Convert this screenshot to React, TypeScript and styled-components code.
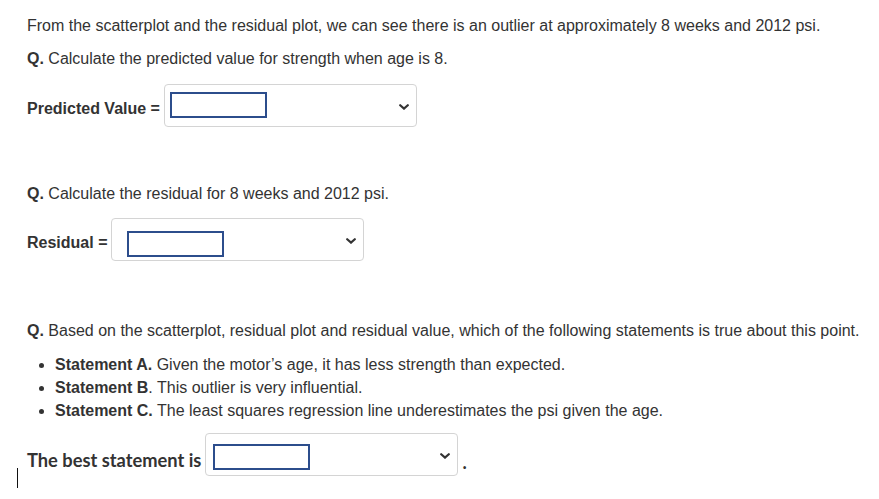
import styled, { createGlobalStyle } from "styled-components";

const GlobalStyle = createGlobalStyle`
  body {
    margin: 0;
    background: #ffffff;
    font-family: "Liberation Sans", Arial, sans-serif;
    color: #333333;
  }
`;

const Page = styled.div`
  padding: 14px 0 30px 27px;
  font-size: 16px;
`;

const Para = styled.p<{ $gap?: number }>`
  margin: 0 0 ${(p) => p.$gap ?? 9}px 0;
  line-height: 24px;
`;

const AnswerRow = styled.div<{ $top: number; $bottom: number }>`
  position: relative;
  display: flex;
  align-items: center;
  margin: ${(p) => p.$top}px 0 ${(p) => p.$bottom}px 0;
`;

const Label = styled.span<{ $lato?: boolean; $nudge?: number }>`
  font-weight: bold;
  font-size: ${(p) => (p.$lato ? 18.3 : 16)}px;
  font-family: ${(p) =>
    p.$lato ? `Lato, "Liberation Sans", sans-serif` : `"Liberation Sans", Arial, sans-serif`};
  margin-top: ${(p) => p.$nudge ?? 0}px;
  margin-right: 4px;
  white-space: nowrap;
`;

const SelectBox = styled.div<{ $padLeft: number; $padTop: number }>`
  box-sizing: border-box;
  width: 253px;
  height: 43px;
  border: 1px solid #d4d4d4;
  border-radius: 4px;
  background: #fff;
  display: flex;
  align-items: flex-start;
  justify-content: space-between;
  padding: ${(p) => p.$padTop}px 7px 0 ${(p) => p.$padLeft}px;
`;

const BlankBox = styled.div`
  box-sizing: border-box;
  width: 97px;
  height: 26px;
  border: 2px solid #2c4d8c;
`;

const Chevron = styled.svg<{ $drop: number }>`
  width: 10px;
  height: 6px;
  margin-top: ${(p) => p.$drop}px;
  flex: none;
`;

const Dot = styled.span`
  font-family: Lato, "Liberation Sans", sans-serif;
  font-weight: bold;
  font-size: 18px;
  margin-left: 4px;
  margin-top: 14px;
`;

const Caret = styled.span`
  position: absolute;
  left: -10px;
  top: 35px;
  width: 1px;
  height: 20px;
  background: #111;
`;

const StatementList = styled.ul`
  margin: 0;
  padding: 0 0 0 28px;
  line-height: 23px;
  li::marker {
    font-size: 15px;
  }
`;

const Select = ({ padLeft, padTop }: { padLeft: number; padTop: number }) => (
  <SelectBox $padLeft={padLeft} $padTop={padTop}>
    <BlankBox />
    <Chevron $drop={19 - padTop} viewBox="0 0 10 6">
      <path d="M1.2 1.2 L5 4.6 L8.8 1.2" fill="none" stroke="#333" strokeWidth="2.2" strokeLinecap="round" />
    </Chevron>
  </SelectBox>
);

export default function App() {
  return (
    <>
      <GlobalStyle />
      <Page>
        <Para>
          From the scatterplot and the residual plot, we can see there is an outlier at
          approximately 8 weeks and 2012 psi.
        </Para>
        <Para $gap={0}>
          <b>Q.</b> Calculate the predicted value for strength when age is 8.
        </Para>
        <AnswerRow $top={13} $bottom={55}>
          <Label $nudge={7}>Predicted Value =</Label>
          <Select padLeft={5} padTop={7} />
        </AnswerRow>
        <Para $gap={12}>
          <b>Q.</b> Calculate the residual for 8 weeks and 2012 psi.
        </Para>
        <AnswerRow $top={0} $bottom={58}>
          <Label $nudge={6}>Residual =</Label>
          <Select padLeft={15} padTop={12} />
        </AnswerRow>
        <Para $gap={10}>
          <b>Q.</b> Based on the scatterplot, residual plot and residual value, which of the
          following statements is true about this point.
        </Para>
        <StatementList>
          <li>
            <b>Statement A.</b> Given the motor’s age, it has less strength than expected.
          </li>
          <li>
            <b>Statement B</b>. This outlier is very influential.
          </li>
          <li>
            <b>Statement C.</b> The least squares regression line underestimates the psi given
            the age.
          </li>
        </StatementList>
        <AnswerRow $top={11} $bottom={0}>
          <Label $lato $nudge={10}>The best statement is</Label>
          <Select padLeft={7} padTop={10} />
          <Dot>.</Dot>
          <Caret />
        </AnswerRow>
      </Page>
    </>
  );
}
